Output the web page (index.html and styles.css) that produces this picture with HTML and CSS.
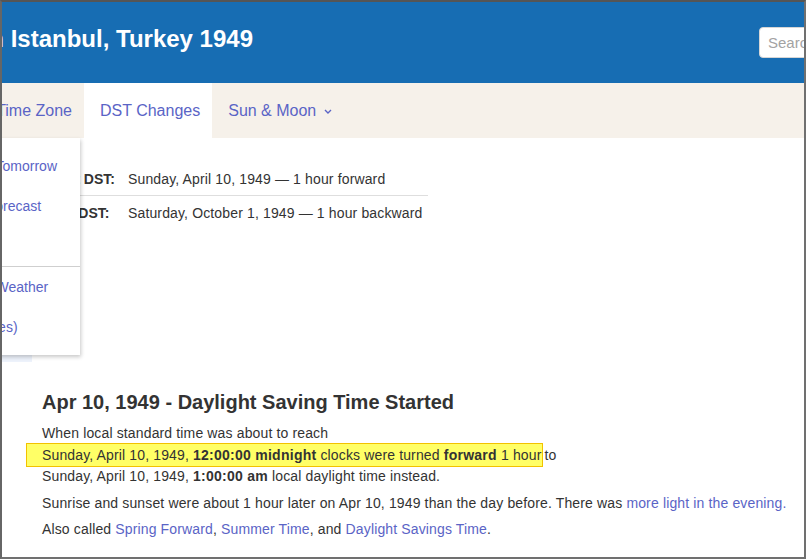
FILE: index.html
```html
<!DOCTYPE html>
<html lang="en">
<head>
<meta charset="utf-8">
<title>Clock Changes in Istanbul, Turkey 1949</title>
<link rel="stylesheet" href="styles.css">
</head>
<body>
<div class="frame">
  <header class="header">
    <div class="title-clip">
      <h1 class="title">Time Zone &amp; Clock Changes in Istanbul, Turkey 1949</h1>
    </div>
    <input class="search" type="text" placeholder="Search">
  </header>
  <nav class="nav">
    <div class="nav-clip">
      <a class="nav-item" href="#">Weather</a>
      <a class="nav-item" href="#">Time Zone</a>
    </div>
    <a class="nav-item active" href="#">DST Changes</a>
    <a class="nav-item" href="#">Sun &amp; Moon
      <svg class="chev" width="8" height="5" viewBox="0 0 8 5"><path d="M1 1 L4 4 L7 1" fill="none" stroke="currentColor" stroke-width="1.4"/></svg>
    </a>
    <ul class="menu">
      <li><a href="#">Weather Today/Tomorrow</a></li>
      <li><a href="#">Hour-by-Hour Forecast</a></li>
      <li><a href="#">14 Day Forecast</a></li>
      <li class="menu-sep"></li>
      <li><a href="#">Yesterday/Past Weather</a></li>
      <li><a href="#">Climate (Averages)</a></li>
    </ul>
  </nav>
  <main class="main">
    <section class="content">
      <table class="dst-table">
        <tr class="first"><th>Start DST:</th><td>Sunday, April 10, 1949 — 1 hour forward</td></tr>
        <tr><th>End DST:</th><td>Saturday, October 1, 1949 — 1 hour backward</td></tr>
      </table>
    </section>
    <div class="promo"></div>
    <section class="content article">
      <h2 class="heading">Apr 10, 1949 - Daylight Saving Time Started</h2>
      <p class="lead">When local standard time was about to reach<br><mark class="hl">Sunday, April 10, 1949, <b>12:00:00 midnight</b> clocks were turned <b>forward</b> 1 hour</mark> to<br>Sunday, April 10, 1949, <b>1:00:00 am</b> local daylight time instead.</p>
      <p>Sunrise and sunset were about 1 hour later on Apr 10, 1949 than the day before. There was <a href="#">more light in the evening.</a></p>
      <p>Also called <a href="#">Spring Forward</a>, <a href="#">Summer Time</a>, and <a href="#">Daylight Savings Time</a>.</p>
    </section>
  </main>
</div>
</body>
</html>
```

FILE: styles.css
```css
html, body {
  margin: 0;
  padding: 0;
  background: #fff;
}
body {
  font-family: "Liberation Sans", Arial, sans-serif;
  color: #333;
}
a {
  color: #5a64c6;
  text-decoration: none;
}
.frame {
  width: 806px;
  height: 559px;
  box-sizing: border-box;
  border: 2px solid #707070;
  border-top-color: #555;
  border-left-color: #666;
  overflow: hidden;
  position: relative;
}
.header {
  height: 81px;
  box-sizing: border-box;
  background: #176db3;
  display: flex;
  align-items: flex-start;
  padding-top: 25px;
}
.title-clip {
  flex: none;
  width: 251px;
  display: flex;
  justify-content: flex-end;
}
.title {
  flex: none;
  margin: 0;
  white-space: nowrap;
  font-size: 24px;
  line-height: 24px;
  font-weight: bold;
  color: #fff;
}
.search {
  flex: none;
  margin: 0 0 0 506px;
  width: 200px;
  height: 31px;
  box-sizing: border-box;
  border: 1px solid #d6d6d6;
  border-radius: 4px;
  padding: 0 8px;
  font-family: "Liberation Sans", Arial, sans-serif;
  font-size: 15px;
  background: #fff;
}
.search::placeholder {
  color: #a3a3a3;
}
.nav {
  position: relative;
  height: 55px;
  background: #f6f1ea;
  display: flex;
  font-size: 16px;
}
.nav-clip {
  flex: none;
  width: 82px;
  display: flex;
  justify-content: flex-end;
}
.nav-item {
  flex: none;
  display: flex;
  align-items: center;
  padding: 0 12px 0 16px;
  white-space: nowrap;
  color: #5a64c6;
}
.nav-item.active {
  background: #fff;
}
.chev {
  margin-left: 8px;
  margin-top: 1px;
}
.menu {
  position: absolute;
  top: 100%;
  left: -120px;
  width: 198px;
  margin: 0;
  padding: 8px 0;
  list-style: none;
  background: #fff;
  box-shadow: 1px 2px 4px rgba(0, 0, 0, 0.22);
  font-size: 14px;
  z-index: 5;
}
.menu li a {
  display: block;
  padding: 0 16px;
  line-height: 40px;
  white-space: nowrap;
}
.menu-sep {
  height: 1px;
  background: #cfcfcf;
}
.content {
  padding-left: 40px;
}
.dst-table {
  margin-top: 24px;
  width: 386px;
  border-collapse: collapse;
  font-size: 14px;
  letter-spacing: 0.14px;
}
.dst-table th {
  width: 72px;
  text-align: left;
  padding: 0 4px 0 6px;
  height: 33px;
  font-weight: bold;
  color: #333;
  white-space: nowrap;
  letter-spacing: 0;
}
.dst-table td {
  padding: 0 4px;
  height: 33px;
  white-space: nowrap;
}
.dst-table tr.first {
  border-bottom: 1px solid #dedede;
}
.promo {
  margin-top: 70px;
  width: 30px;
  height: 63px;
  background: #edf2fb;
}
.heading {
  margin: 28px 0 0;
  font-size: 20px;
  line-height: 24px;
  font-weight: bold;
  color: #333;
}
.article p {
  margin: 5px 0 0;
  font-size: 14px;
  line-height: 21.5px;
  letter-spacing: 0.14px;
}
.article p.lead {
  margin-top: 9px;
}
.article b {
  letter-spacing: 0.26px;
}
.hl {
  background: #ffff66;
  color: #333;
  border: 1px solid #f2c200;
  padding: 3px 1px 3px 15px;
  margin-left: -16px;
  margin-right: -3px;
}
```
